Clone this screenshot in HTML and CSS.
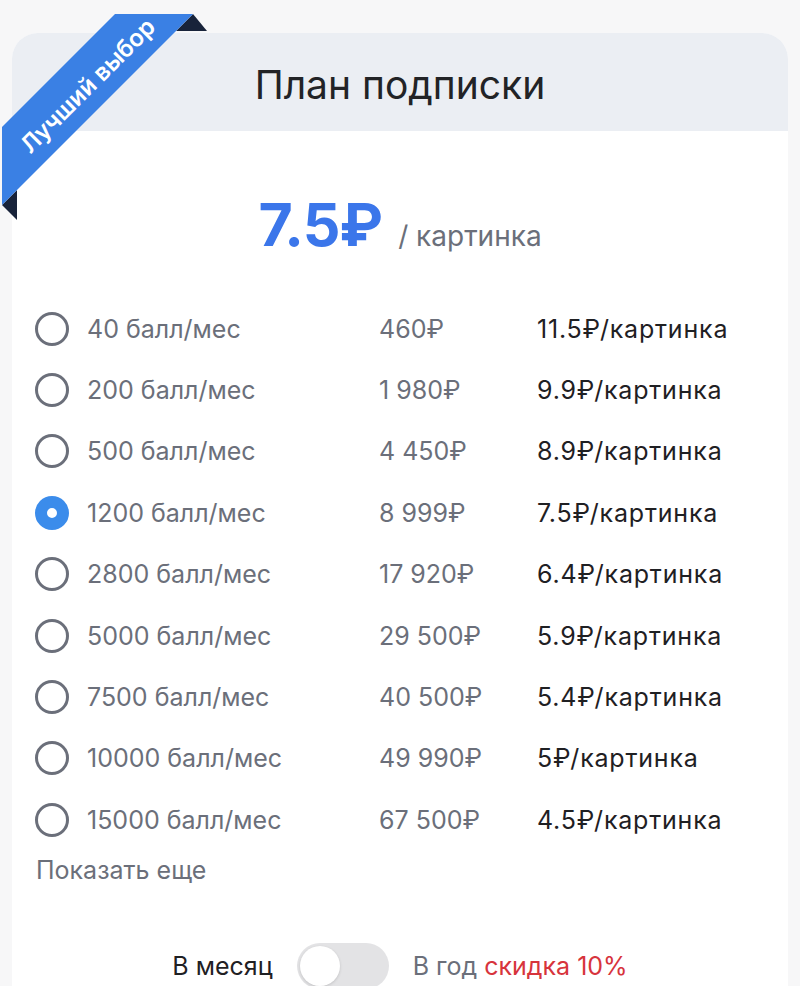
FILE: index.html
```html
<!DOCTYPE html>
<html lang="ru">
<head>
  <meta charset="UTF-8">
  <meta name="viewport" content="width=device-width, initial-scale=1.0">
  <title>План подписки</title>
  <link rel="stylesheet" href="styles.css">
</head>
<body>

  <div class="page">
    <!-- Лента "Лучший выбор" -->
    <div class="ribbon">
      <svg class="ribbon-shape" width="210" height="225" viewBox="0 0 210 225">
        <polygon points="193,14 207,31 176,31" fill="#18233a"/>
        <polygon points="17,190 17,220 2,205" fill="#18233a"/>
        <polygon points="115,14 193,14 2,205 2,127" fill="#3a80e4"/>
      </svg>
      <div class="ribbon-text">Лучший выбор</div>
    </div>

    <div class="card">
      <div class="card-header">
        <h1>План подписки</h1>
      </div>

      <div class="price">
        <span class="price-value">7.5₽</span>
        <span class="price-unit">/ картинка</span>
      </div>

      <!-- Тарифы -->
      <div class="plans">
        <label class="plan">
          <span class="radio"></span>
          <span class="plan-points">40 балл/мес</span>
          <span class="plan-sum">460₽</span>
          <span class="plan-per">11.5₽/картинка</span>
        </label>
        <label class="plan">
          <span class="radio"></span>
          <span class="plan-points">200 балл/мес</span>
          <span class="plan-sum">1 980₽</span>
          <span class="plan-per">9.9₽/картинка</span>
        </label>
        <label class="plan">
          <span class="radio"></span>
          <span class="plan-points">500 балл/мес</span>
          <span class="plan-sum">4 450₽</span>
          <span class="plan-per">8.9₽/картинка</span>
        </label>
        <label class="plan selected">
          <span class="radio"></span>
          <span class="plan-points">1200 балл/мес</span>
          <span class="plan-sum">8 999₽</span>
          <span class="plan-per">7.5₽/картинка</span>
        </label>
        <label class="plan">
          <span class="radio"></span>
          <span class="plan-points">2800 балл/мес</span>
          <span class="plan-sum">17 920₽</span>
          <span class="plan-per">6.4₽/картинка</span>
        </label>
        <label class="plan">
          <span class="radio"></span>
          <span class="plan-points">5000 балл/мес</span>
          <span class="plan-sum">29 500₽</span>
          <span class="plan-per">5.9₽/картинка</span>
        </label>
        <label class="plan">
          <span class="radio"></span>
          <span class="plan-points">7500 балл/мес</span>
          <span class="plan-sum">40 500₽</span>
          <span class="plan-per">5.4₽/картинка</span>
        </label>
        <label class="plan">
          <span class="radio"></span>
          <span class="plan-points">10000 балл/мес</span>
          <span class="plan-sum">49 990₽</span>
          <span class="plan-per">5₽/картинка</span>
        </label>
        <label class="plan">
          <span class="radio"></span>
          <span class="plan-points">15000 балл/мес</span>
          <span class="plan-sum">67 500₽</span>
          <span class="plan-per">4.5₽/картинка</span>
        </label>
      </div>

      <div class="show-more">Показать еще</div>

      <!-- Переключатель месяц / год -->
      <div class="period">
        <span class="period-month">В месяц</span>
        <span class="switch"><span class="knob"></span></span>
        <span class="period-year">В год <span class="discount">скидка 10%</span></span>
      </div>
    </div>
  </div>

</body>
</html>
```

FILE: styles.css
```css
* {
    box-sizing: border-box;
}

body {
    margin: 0;
    background: #f7f7f8;
    font-family: Inter, "Noto Sans", sans-serif;
    color: #1f2023;
}

.page {
    position: relative;
    padding: 33px 12px 0;
}

/* Лента */
.ribbon {
    position: absolute;
    top: 0;
    left: 0;
    width: 210px;
    height: 225px;
    z-index: 2;
}

.ribbon-shape {
    display: block;
}

.ribbon-text {
    position: absolute;
    left: -22px;
    top: 72px;
    width: 220px;
    line-height: 28px;
    text-align: center;
    color: #ffffff;
    font-size: 24px;
    font-weight: 600;
    transform: rotate(-45deg);
}

/* Карточка */
.card {
    background: #ffffff;
    border-radius: 26px 26px 0 0;
    overflow: hidden;
    min-height: 960px;
}

.card-header {
    height: 98px;
    background: #ebeef3;
    display: flex;
    align-items: center;
    justify-content: center;
}

.card-header h1 {
    margin: 0;
    font-size: 39px;
    font-weight: 400;
    color: #222326;
    padding-top: 4px;
}

/* Цена */
.price {
    display: flex;
    align-items: baseline;
    justify-content: center;
    gap: 16px;
    margin-top: 58px;
    height: 62px;
}

.price-value {
    font-size: 59px;
    font-weight: 700;
    color: #3b76ea;
    letter-spacing: -1px;
}

.price-unit {
    font-size: 28px;
    color: #6b6f7a;
}

/* Тарифы */
.plans {
    margin-top: 47px;
    padding-left: 23px;
}

.plan {
    display: grid;
    grid-template-columns: 52px 292px 158px 1fr;
    align-items: center;
    height: 61.4px;
    font-size: 25px;
}

.radio {
    width: 34px;
    height: 34px;
    border: 3px solid #6b6f7a;
    border-radius: 50%;
}

.plan.selected .radio {
    border: 12px solid #3b8ceb;
    background: #ffffff;
}

.plan-points,
.plan-sum {
    color: #6b6f7a;
}

.plan-per {
    color: #1f2023;
    letter-spacing: 0.8px;
}

.show-more {
    padding-left: 24px;
    margin-top: 3px;
    font-size: 25px;
    color: #6b6f7a;
    line-height: 32px;
}

/* Период */
.period {
    display: flex;
    align-items: center;
    justify-content: center;
    gap: 24px;
    margin-top: 57px;
    font-size: 25px;
}

.period-month {
    color: #1f2023;
}

.switch {
    width: 92px;
    height: 46px;
    border-radius: 23px;
    background: #e3e3e5;
    padding: 3px;
    display: flex;
}

.knob {
    width: 40px;
    height: 40px;
    border-radius: 50%;
    background: #ffffff;
    box-shadow: 0 1px 3px rgba(0, 0, 0, 0.15);
}

.period-year {
    color: #6b6f7a;
}

.discount {
    color: #d7343c;
}
```
